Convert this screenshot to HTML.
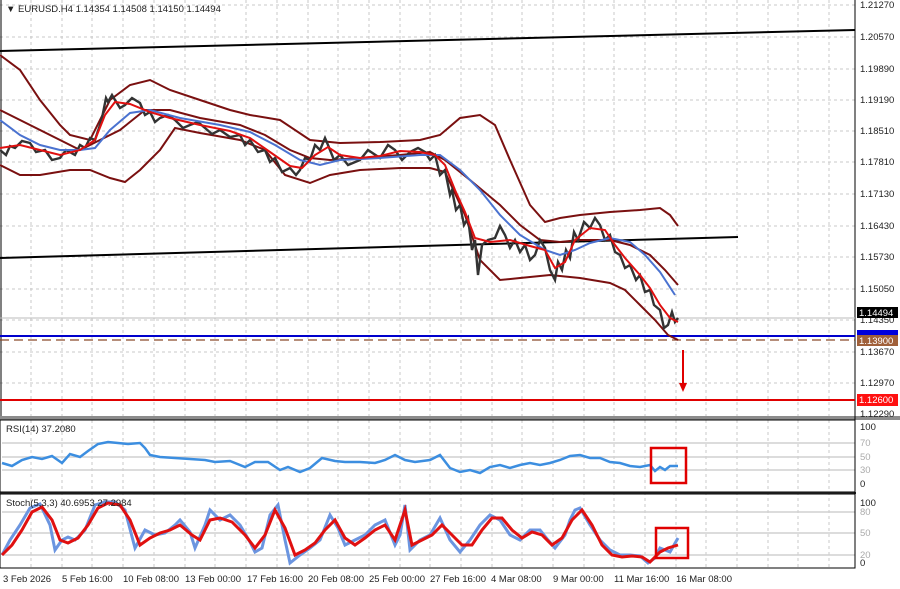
<!DOCTYPE html>
<html><head><meta charset="utf-8"><style>
html,body{margin:0;padding:0;background:#fff;}
svg{display:block;font-family:"Liberation Sans",sans-serif;}
</style></head><body>
<svg width="900" height="589" viewBox="0 0 900 589" xmlns="http://www.w3.org/2000/svg">
<rect width="900" height="589" fill="#fff"/>
<g stroke="#c8c8c8" stroke-width="1" stroke-dasharray="3,3">
<path d="M31,0V568M62,0V568M92,0V568M123,0V568M154,0V568M185,0V568M215,0V568M246,0V568M277,0V568M308,0V568M338,0V568M369,0V568M400,0V568M430,0V568M461,0V568M492,0V568M522,0V568M553,0V568M584,0V568M614,0V568M645,0V568M676,0V568M706,0V568M737,0V568M768,0V568M798,0V568M829,0V568"/>
<path d="M0,5H855M0,37H855M0,69H855M0,100H855M0,131H855M0,162H855M0,194H855M0,226H855M0,257H855M0,289H855M0,320H855M0,352H855M0,383H855"/>
</g>
<rect x="0" y="416" width="900" height="4" fill="#8c8c8c"/>
<rect x="0" y="492" width="856" height="2" fill="#333"/>
<g stroke="#d0d0d0" stroke-width="1.5">
<path d="M2,443H855M2,457H855M2,470H855M2,512H855M2,533H855M2,555H855"/>
</g>
<rect x="0" y="420" width="855" height="72" fill="none" stroke="#000" stroke-width="1"/>
<rect x="0" y="494" width="855" height="74" fill="none" stroke="#000" stroke-width="1"/>
<line x1="855" y1="0" x2="855" y2="568" stroke="#000"/>
<line x1="1" y1="0" x2="1" y2="416" stroke="#000"/>
<line x1="0" y1="51" x2="855" y2="30" stroke="#000" stroke-width="2"/>
<line x1="0" y1="258" x2="738" y2="237" stroke="#000" stroke-width="2"/>
<line x1="0" y1="318" x2="855" y2="318" stroke="#bbb" stroke-width="1"/>
<line x1="0" y1="336" x2="855" y2="336" stroke="#0000cc" stroke-width="2"/>
<line x1="0" y1="340" x2="855" y2="340" stroke="#8b4a2b" stroke-width="1.2" stroke-dasharray="9,5"/>
<line x1="0" y1="400" x2="855" y2="400" stroke="#e00000" stroke-width="2"/>
<line x1="683" y1="350" x2="683" y2="384" stroke="#e00000" stroke-width="2"/>
<path d="M679,383L683,392L687,383Z" fill="#e00000"/>
<g fill="none" stroke="#7a1010" stroke-width="2">
<polyline points="0,55 20,70 40,100 60,125 70,135 90,140 110,100 130,85 150,80 170,90 200,100 230,110 250,115 280,120 310,140 340,143 380,142 420,140 440,135 460,118 480,115 495,125 510,160 530,205 545,222 560,218 580,215 610,212 640,210 660,208 670,215 678,226"/>
<polyline points="0,110 30,125 60,140 80,150 100,140 120,130 145,110 170,110 200,118 240,125 265,135 290,150 310,158 330,160 360,158 400,155 430,152 445,160 470,180 500,205 520,225 540,240 560,242 580,240 610,240 630,245 650,255 665,270 678,285"/>
<polyline points="0,165 20,175 40,175 70,170 90,170 110,178 125,182 140,170 160,150 175,128 200,133 240,140 265,150 285,175 310,183 330,175 360,170 400,168 430,168 445,172 465,215 480,260 500,280 520,278 550,275 580,278 610,283 625,290 640,305 655,320 668,335 678,340"/>
</g>
<polyline fill="none" stroke="#333" stroke-width="2.4" points="0,150 6,155 10,146 15,148 22,141 30,143 36,152 45,150 52,160 60,158 66,150 75,155 80,145 85,148 90,138 95,140 100,125 102,118 106,98 108,102 112,95 115,100 120,108 125,105 132,98 140,103 145,115 150,112 155,122 160,118 168,115 175,120 183,128 190,125 198,122 205,128 212,134 220,130 230,137 240,135 245,145 250,140 258,152 265,150 270,162 275,158 282,172 290,168 296,175 300,170 305,158 310,160 315,145 320,150 325,138 328,145 334,160 340,155 348,165 360,160 368,150 380,158 388,145 395,150 402,160 410,152 418,148 425,152 430,160 435,155 440,175 445,170 450,195 452,190 456,210 460,205 464,225 468,218 472,250 475,240 478,275 482,245 488,240 495,238 500,226 505,235 510,248 515,240 520,252 525,245 530,260 535,255 540,240 545,248 550,270 555,280 558,262 562,270 566,250 570,258 574,232 578,240 584,222 590,228 595,218 600,225 605,240 610,235 615,252 620,255 625,268 630,265 636,280 640,275 645,292 650,290 654,305 660,310 664,328 668,325 672,312 675,322 678,318"/>
<polyline fill="none" stroke="#4a72d0" stroke-width="2" points="0,120 20,135 40,145 60,150 80,150 95,148 110,130 130,113 150,110 180,118 220,125 250,132 275,145 300,160 320,165 340,160 380,158 420,155 440,155 460,170 480,190 500,215 520,235 545,250 560,255 575,250 590,243 610,238 630,242 645,255 660,272 675,295"/>
<polyline fill="none" stroke="#e01010" stroke-width="2" points="0,148 20,145 40,150 60,155 80,150 95,140 105,115 115,102 130,104 150,112 170,118 200,125 230,131 250,138 270,152 290,166 302,168 315,155 328,147 340,155 360,158 380,156 400,151 420,152 435,155 445,165 455,190 465,212 475,238 490,242 510,240 530,246 545,250 555,268 565,262 575,240 590,228 605,230 615,245 625,258 640,275 650,288 660,305 670,318 678,322"/>
<polyline fill="none" stroke="#3c8ee0" stroke-width="2.5" points="2,463 12,466 22,460 32,457 42,459 52,456 62,463 70,454 80,457 88,451 98,444 108,442 118,443 128,444 140,443 145,448 150,455 160,457 175,458 190,459 205,460 215,462 230,461 245,467 255,462 268,462 280,470 288,467 300,472 310,468 322,458 335,461 345,462 360,462 375,463 385,460 395,455 405,460 415,462 430,460 440,455 450,468 460,472 470,470 480,473 490,467 500,465 510,468 520,465 530,463 540,465 550,463 560,460 570,456 580,455 590,458 600,458 610,462 620,463 630,466 640,467 650,465 655,471 660,467 665,470 670,466 678,466"/>
<polyline fill="none" stroke="#6b95e0" stroke-width="3" points="2,555 10,540 20,525 30,508 40,504 50,525 55,550 62,540 68,537 75,540 85,530 95,505 105,502 115,502 125,510 135,548 145,530 155,535 165,533 175,525 180,520 190,532 195,548 205,525 210,510 220,520 230,515 240,525 250,542 255,552 262,548 270,515 278,505 285,540 290,563 300,555 310,548 320,540 330,515 338,528 345,545 355,540 365,535 375,525 385,520 395,545 400,535 405,505 410,550 420,540 430,535 440,518 450,540 460,552 470,540 480,525 490,515 500,520 510,535 520,540 530,530 540,530 548,540 555,548 565,535 570,520 575,510 580,508 590,525 600,540 610,550 620,555 630,555 640,556 648,563 655,558 660,548 665,550 670,552 678,538"/>
<polyline fill="none" stroke="#e01010" stroke-width="3" points="2,555 12,545 22,530 32,512 42,507 52,520 60,540 68,543 78,538 88,525 98,508 108,503 120,505 130,520 140,545 150,538 160,533 170,530 180,525 192,535 200,540 210,520 220,518 232,522 245,535 255,548 265,535 275,510 285,528 295,555 305,550 315,543 325,530 335,520 345,538 355,545 365,538 375,530 385,525 395,540 405,510 412,545 422,540 432,535 442,525 452,535 462,545 472,545 482,530 492,518 502,518 512,530 522,538 532,532 542,535 552,545 562,538 572,520 582,510 592,525 602,545 612,555 622,557 632,556 642,557 650,562 660,552 668,548 678,545"/>
<rect x="651" y="448" width="35" height="35" fill="none" stroke="#e00000" stroke-width="2.5"/>
<rect x="656" y="528" width="32" height="30" fill="none" stroke="#e00000" stroke-width="2.5"/>
<g font-size="9.5" fill="#222">
<text x="6" y="12">▼ EURUSD.H4  1.14354 1.14508 1.14150 1.14494</text>
<text x="6" y="432">RSI(14) 37.2080</text>
<text x="6" y="506">Stoch(5,3,3) 40.6953 27.2984</text>
</g>
<g font-size="9.5" fill="#222">
<text x="860" y="8">1.21270</text><text x="860" y="40">1.20570</text><text x="860" y="72">1.19890</text><text x="860" y="103">1.19190</text><text x="860" y="134">1.18510</text><text x="860" y="165">1.17810</text><text x="860" y="197">1.17130</text><text x="860" y="229">1.16430</text><text x="860" y="260">1.15730</text><text x="860" y="292">1.15050</text><text x="860" y="323">1.14350</text><text x="860" y="355">1.13670</text><text x="860" y="386">1.12970</text><text x="860" y="417">1.12290</text>
<text x="860" y="430">100</text><text x="860" y="487">0</text>
<text x="860" y="506">100</text><text x="860" y="566">0</text>
</g>
<g font-size="9.5" fill="#aaa">
<text x="860" y="446">70</text><text x="860" y="460">50</text><text x="860" y="473">30</text>
<text x="860" y="515">80</text><text x="860" y="536">50</text><text x="860" y="558">20</text>
</g>
<rect x="857" y="307" width="41" height="11" fill="#000"/><text x="859" y="316" font-size="9.5" fill="#fff">1.14494</text>
<rect x="857" y="330" width="41" height="6" fill="#0000dd"/>
<rect x="857" y="335" width="41" height="11" fill="#a0603a"/><text x="859" y="344" font-size="9.5" fill="#fff">1.13900</text>
<rect x="857" y="394" width="41" height="12" fill="#ff1010"/><text x="859" y="403" font-size="9.5" fill="#fff">1.12600</text>
<g font-size="9.5" fill="#222">
<text x="3" y="582">3 Feb 2026</text><text x="62" y="582">5 Feb 16:00</text><text x="123" y="582">10 Feb 08:00</text><text x="185" y="582">13 Feb 00:00</text><text x="247" y="582">17 Feb 16:00</text><text x="308" y="582">20 Feb 08:00</text><text x="369" y="582">25 Feb 00:00</text><text x="430" y="582">27 Feb 16:00</text><text x="491" y="582">4 Mar 08:00</text><text x="553" y="582">9 Mar 00:00</text><text x="614" y="582">11 Mar 16:00</text><text x="676" y="582">16 Mar 08:00</text>
</g>
</svg>
</body></html>
